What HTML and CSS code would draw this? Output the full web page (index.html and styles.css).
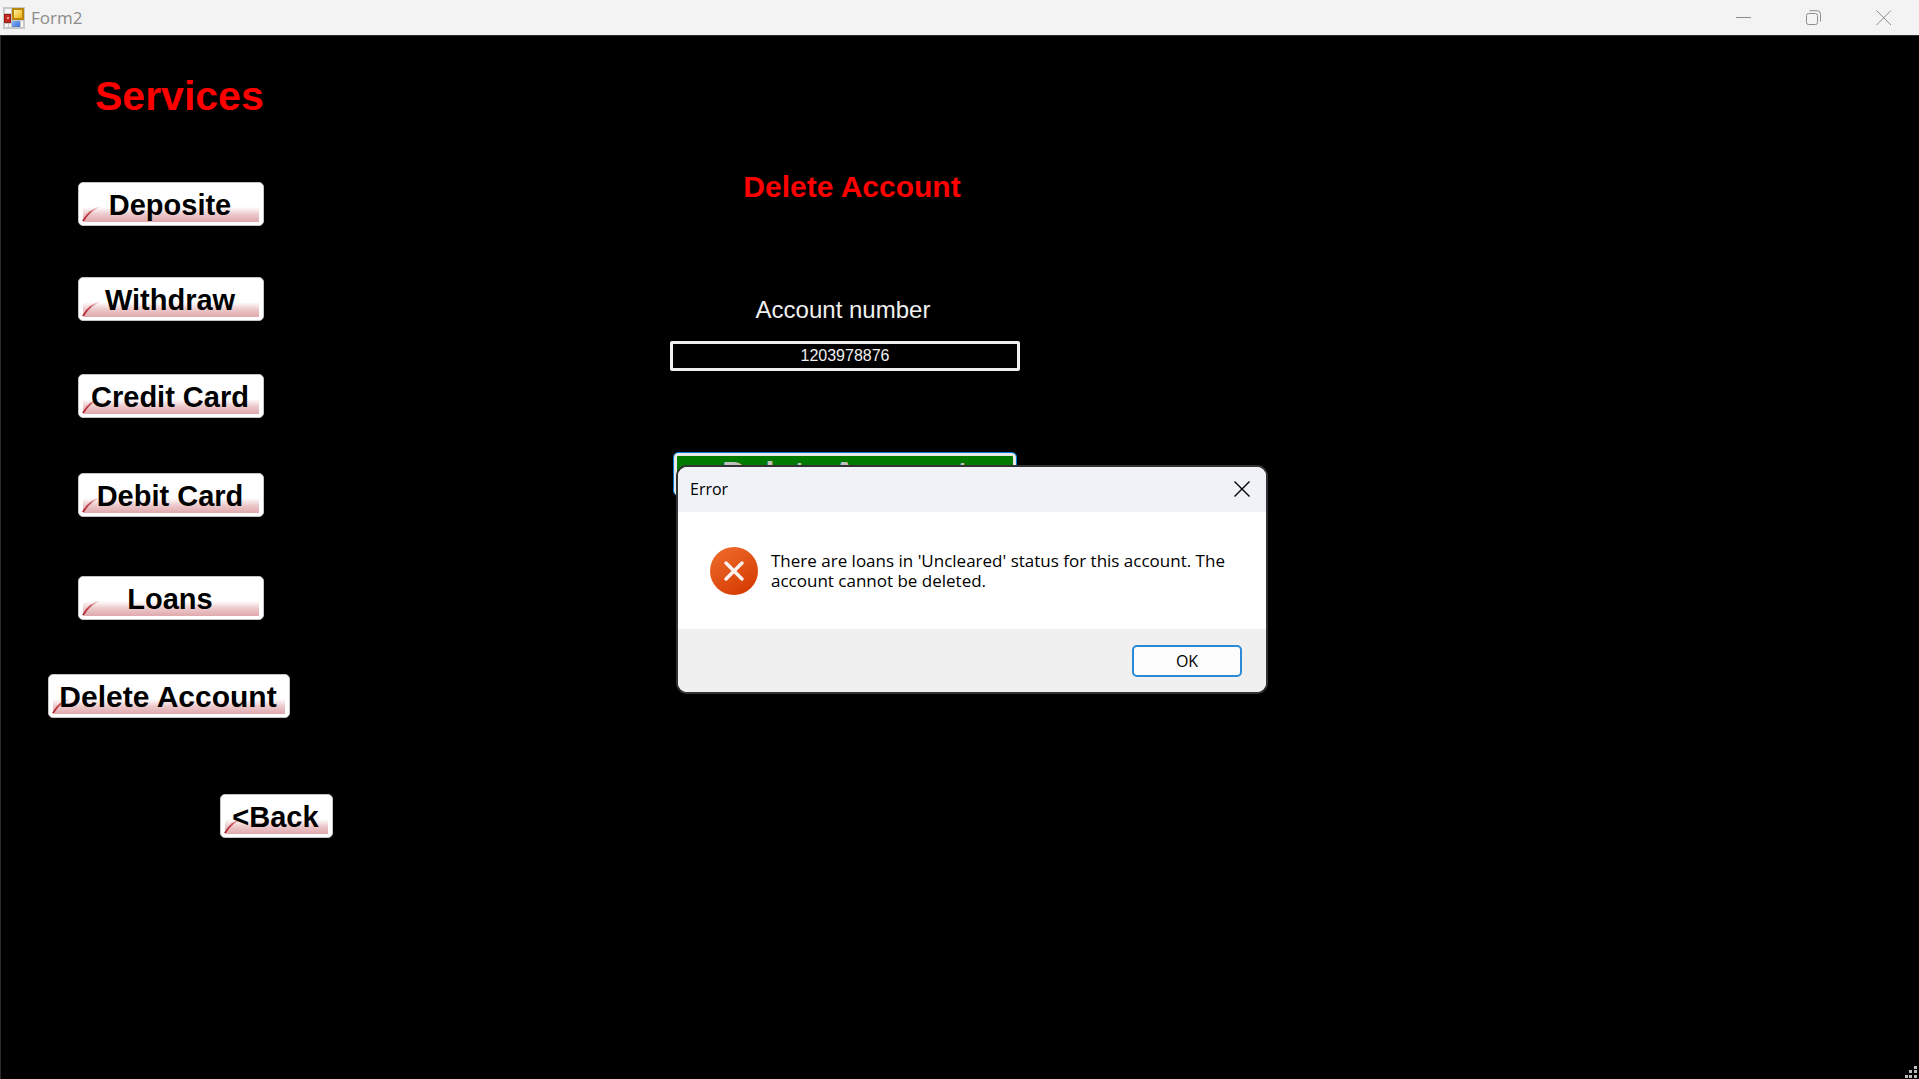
FILE: index.html
```html
<!DOCTYPE html>
<html lang="en">
<head>
<meta charset="utf-8">
<title>Form2</title>
<link rel="stylesheet" href="styles.css">
</head>
<body>
<div class="window">
  <header class="titlebar">
    <svg class="app-icon" width="22" height="22" viewBox="0 0 22 22" aria-hidden="true">
      <defs>
        <linearGradient id="gold" x1="0" y1="0" x2="1" y2="1"><stop offset="0" stop-color="#fff0a0"/><stop offset="1" stop-color="#eeb010"/></linearGradient>
        <linearGradient id="blue" x1="0" y1="0" x2="1" y2="1"><stop offset="0" stop-color="#86b4f4"/><stop offset="1" stop-color="#3a70d8"/></linearGradient>
      </defs>
      <rect width="22" height="22" fill="#c8c8c8"/>
      <rect x="2" y="2" width="6" height="4" fill="#f6f6f6"/>
      <rect x="2" y="17" width="3" height="3" fill="#f6f6f6"/>
      <rect x="6" y="17" width="2" height="3" fill="#f6f6f6"/>
      <rect x="18" y="14" width="2" height="6" fill="#f6f6f6"/>
      <rect x="9" y="1" width="12" height="12" fill="#b8860b"/>
      <rect x="11" y="3" width="8" height="8" fill="url(#gold)"/>
      <rect x="1" y="7" width="7" height="9" fill="#a01818"/>
      <rect x="2" y="8" width="5" height="7" fill="#c02c24"/>
      <rect x="4" y="10" width="2" height="2" fill="#f0a090"/>
      <rect x="9" y="14" width="8" height="6" fill="url(#blue)"/>
    </svg>
    <span class="titlebar-text">Form2</span>
    <div class="window-controls">
      <button class="window-control" type="button" aria-label="Minimize">
        <svg width="16" height="16" viewBox="0 0 16 16"><path d="M0 7.500H15"/></svg>
      </button>
      <button class="window-control" type="button" aria-label="Restore">
        <svg width="16" height="16" viewBox="0 0 16 16"><rect x=".5" y="3.500" width="11" height="11" rx="2"/><path d="M3.500 .7H11Q14.500 .7 14.500 4.200V11.500"/></svg>
      </button>
      <button class="window-control" type="button" aria-label="Close">
        <svg width="16" height="16" viewBox="0 0 16 16"><path d="M.5 .5L15 15M15 .5L.5 15"/></svg>
      </button>
    </div>
  </header>

  <div class="form">
    <svg class="symbols" aria-hidden="true">
      <defs>
        <linearGradient id="fade" x1="0" y1="1" x2="1" y2="0"><stop offset="0" stop-color="#b01822"/><stop offset=".5" stop-color="#c4525a"/><stop offset="1" stop-color="#f4dcde" stop-opacity=".4"/></linearGradient>
        <symbol id="swoosh" viewBox="0 0 22 16"><path d="M0 15Q7 2 20 0Q9 4 2 15Z" fill="url(#fade)"/></symbol>
      </defs>
    </svg>

    <nav class="services">
      <h1 class="services-title">Services</h1>
      <div class="services-list">
        <button class="skin-button" type="button"><svg class="swoosh"><use href="#swoosh"/></svg><span>Deposite</span></button>
        <button class="skin-button" type="button"><svg class="swoosh"><use href="#swoosh"/></svg><span>Withdraw</span></button>
        <button class="skin-button" type="button"><svg class="swoosh"><use href="#swoosh"/></svg><span>Credit Card</span></button>
        <button class="skin-button" type="button"><svg class="swoosh"><use href="#swoosh"/></svg><span>Debit Card</span></button>
        <button class="skin-button" type="button"><svg class="swoosh"><use href="#swoosh"/></svg><span>Loans</span></button>
        <button class="skin-button skin-button-wide" type="button"><svg class="swoosh"><use href="#swoosh"/></svg><span>Delete Account</span></button>
        <button class="skin-button skin-button-back" type="button"><svg class="swoosh"><use href="#swoosh"/></svg><span>&lt;Back</span></button>
      </div>
    </nav>

    <main class="panel">
      <h2 class="panel-title">Delete Account</h2>
      <label class="field-label" for="account">Account number</label>
      <input class="field" id="account" type="text" value="1203978876">
      <button class="delete-button" type="button">Delete Account</button>
    </main>

    <svg class="size-grip" width="14" height="14" viewBox="0 0 14 14" aria-hidden="true">
      <path d="M10 1h3v3h-3zM5 5h3v3H5zM10 5h3v3h-3zM1 10h3v3H1zM5 10h3v3H5zM10 10h3v3h-3z"/>
    </svg>
  </div>

  <section class="dialog" role="alertdialog" aria-labelledby="dialog-title" aria-describedby="dialog-message">
    <header class="dialog-header">
      <span id="dialog-title">Error</span>
      <button class="dialog-close" type="button" aria-label="Close">
        <svg width="16" height="16" viewBox="0 0 16 16"><path d="M.5 .5L15.500 15.500M15.500 .5L.5 15.500"/></svg>
      </button>
    </header>
    <div class="dialog-body">
      <svg class="dialog-icon" width="48" height="48" viewBox="0 0 48 48" aria-hidden="true">
        <defs><linearGradient id="orange" x1=".2" y1="0" x2=".8" y2="1"><stop offset="0" stop-color="#ee6a2c"/><stop offset="1" stop-color="#d43a00"/></linearGradient></defs>
        <circle cx="24" cy="24" r="24" fill="url(#orange)"/>
        <path d="M16 16L32 32M32 16L16 32" stroke="#fbf3ef" stroke-width="3.500" stroke-linecap="round"/>
      </svg>
      <p class="dialog-message" id="dialog-message">There are loans in 'Uncleared' status for this account. The account cannot be deleted.</p>
    </div>
    <footer class="dialog-footer">
      <button class="ok-button" type="button">OK</button>
    </footer>
  </section>
</div>
</body>
</html>
```
FILE: styles.css
```css
* {
  box-sizing: border-box;
}

body {
  margin: 0;
  background: #000;
  font-family: "Liberation Sans", Arial, sans-serif;
}

h1,
h2,
p {
  margin: 0;
}

button {
  padding: 0;
  font-family: inherit;
}

.window {
  position: relative;
  display: flex;
  flex-direction: column;
  min-height: 100vh;
}

.titlebar {
  display: flex;
  align-items: center;
  height: 35px;
  padding-left: 3px;
  background: #f3f3f3;
  color: #8c8c8c;
  font-family: "Open Sans", "Noto Sans", sans-serif;
  font-size: 17px;
}

.app-icon {
  margin-right: 6px;
}

.window-controls {
  display: flex;
  margin-left: auto;
}

.window-control {
  display: grid;
  place-items: center;
  width: 70px;
  height: 33px;
  border: 0;
  background: none;
}

.window-control svg {
  fill: none;
  stroke: #8c8c8c;
  stroke-width: 1;
}

.form {
  position: relative;
  flex: 1;
  display: grid;
  grid-template-columns: 622px 350px 1fr;
  padding-left: 47px;
  border-top: 1px solid #2b2b2b;
  border-left: 1px solid #2b2b2b;
}

.symbols {
  position: absolute;
  width: 0;
  height: 0;
}

.services {
  padding-top: 37px;
}

.services-title {
  margin-bottom: 63px;
  padding-left: 47px;
  color: #f00;
  font-size: 41px;
  line-height: 46px;
}

.services-list {
  display: grid;
  grid-template-rows: 95px 97px 99px 103px 98px 120px 44px;
  justify-items: start;
  align-items: start;
}

.skin-button {
  position: relative;
  width: 186px;
  height: 44px;
  margin-left: 30px;
  padding: 2px 2px 0 0;
  border: 1px solid #c4c4c4;
  border-radius: 5px;
  background:
    linear-gradient(#fff, #ecc8ca 50%, #dfa9ad) center bottom 3px / calc(100% - 8px) 15px no-repeat,
    #fff;
  color: #000;
  font-size: 29px;
  font-weight: bold;
  line-height: 40px;
  white-space: nowrap;
}

.skin-button span {
  position: relative;
}

.skin-button-wide {
  width: 242px;
  margin-left: 0;
  font-size: 30px;
}

.skin-button-back {
  width: 113px;
  margin-left: 172px;
}

.swoosh {
  position: absolute;
  left: 3px;
  bottom: 3px;
  width: 22px;
  height: 16px;
}

.panel {
  display: flex;
  flex-direction: column;
  padding-top: 134px;
  text-align: center;
}

.panel-title {
  padding-left: 14px;
  color: #f00;
  font-size: 30px;
  line-height: 34px;
}

.field-label {
  margin-top: 92px;
  padding-right: 4px;
  color: #f0f0f0;
  font-size: 24px;
  line-height: 28px;
}

.field {
  height: 30px;
  margin-top: 17px;
  padding: 0;
  border: 3px solid #f0f0f0;
  border-radius: 2px;
  background: #000;
  color: #f0f0f0;
  font-family: inherit;
  font-size: 16px;
  text-align: center;
}

.delete-button {
  height: 44px;
  margin: 81px 3px 0;
  padding-bottom: 2px;
  border: 1px solid #0078d7;
  border-radius: 5px;
  background: #007a00;
  box-shadow: inset 0 0 0 3px #e8e8e8;
  color: #c0c0c0;
  font-size: 34px;
  font-weight: bold;
  line-height: 38px;
}

.size-grip {
  position: absolute;
  right: 1px;
  bottom: 0;
  fill: #bdbdbd;
}

.dialog {
  position: absolute;
  left: 676px;
  top: 465px;
  width: 592px;
  overflow: hidden;
  border: 2px solid #333;
  border-radius: 11px;
  background: #fff;
  color: #000;
  font-family: "Open Sans", "Noto Sans", sans-serif;
  font-size: 16px;
}

.dialog-header {
  display: flex;
  align-items: center;
  justify-content: space-between;
  height: 45px;
  padding: 0 16px 2px 12px;
  background: #f1f2f8;
}

.dialog-close {
  display: grid;
  border: 0;
  background: none;
}

.dialog-close svg {
  fill: none;
  stroke: #000;
  stroke-width: 1.4;
}

.dialog-body {
  display: flex;
  align-items: center;
  gap: 13px;
  min-height: 117px;
  padding: 0 32px;
}

.dialog-icon {
  flex: none;
}

.dialog-message {
  font-size: 17px;
  line-height: 20px;
}

.dialog-footer {
  display: flex;
  align-items: center;
  justify-content: flex-end;
  height: 63px;
  padding: 0 24px;
  background: #f0f0f0;
}

.ok-button {
  width: 110px;
  height: 32px;
  border: 2px solid #2a8ad8;
  border-radius: 5px;
  background: #fdfdfd;
  color: #000;
  font-size: 16px;
}
```
